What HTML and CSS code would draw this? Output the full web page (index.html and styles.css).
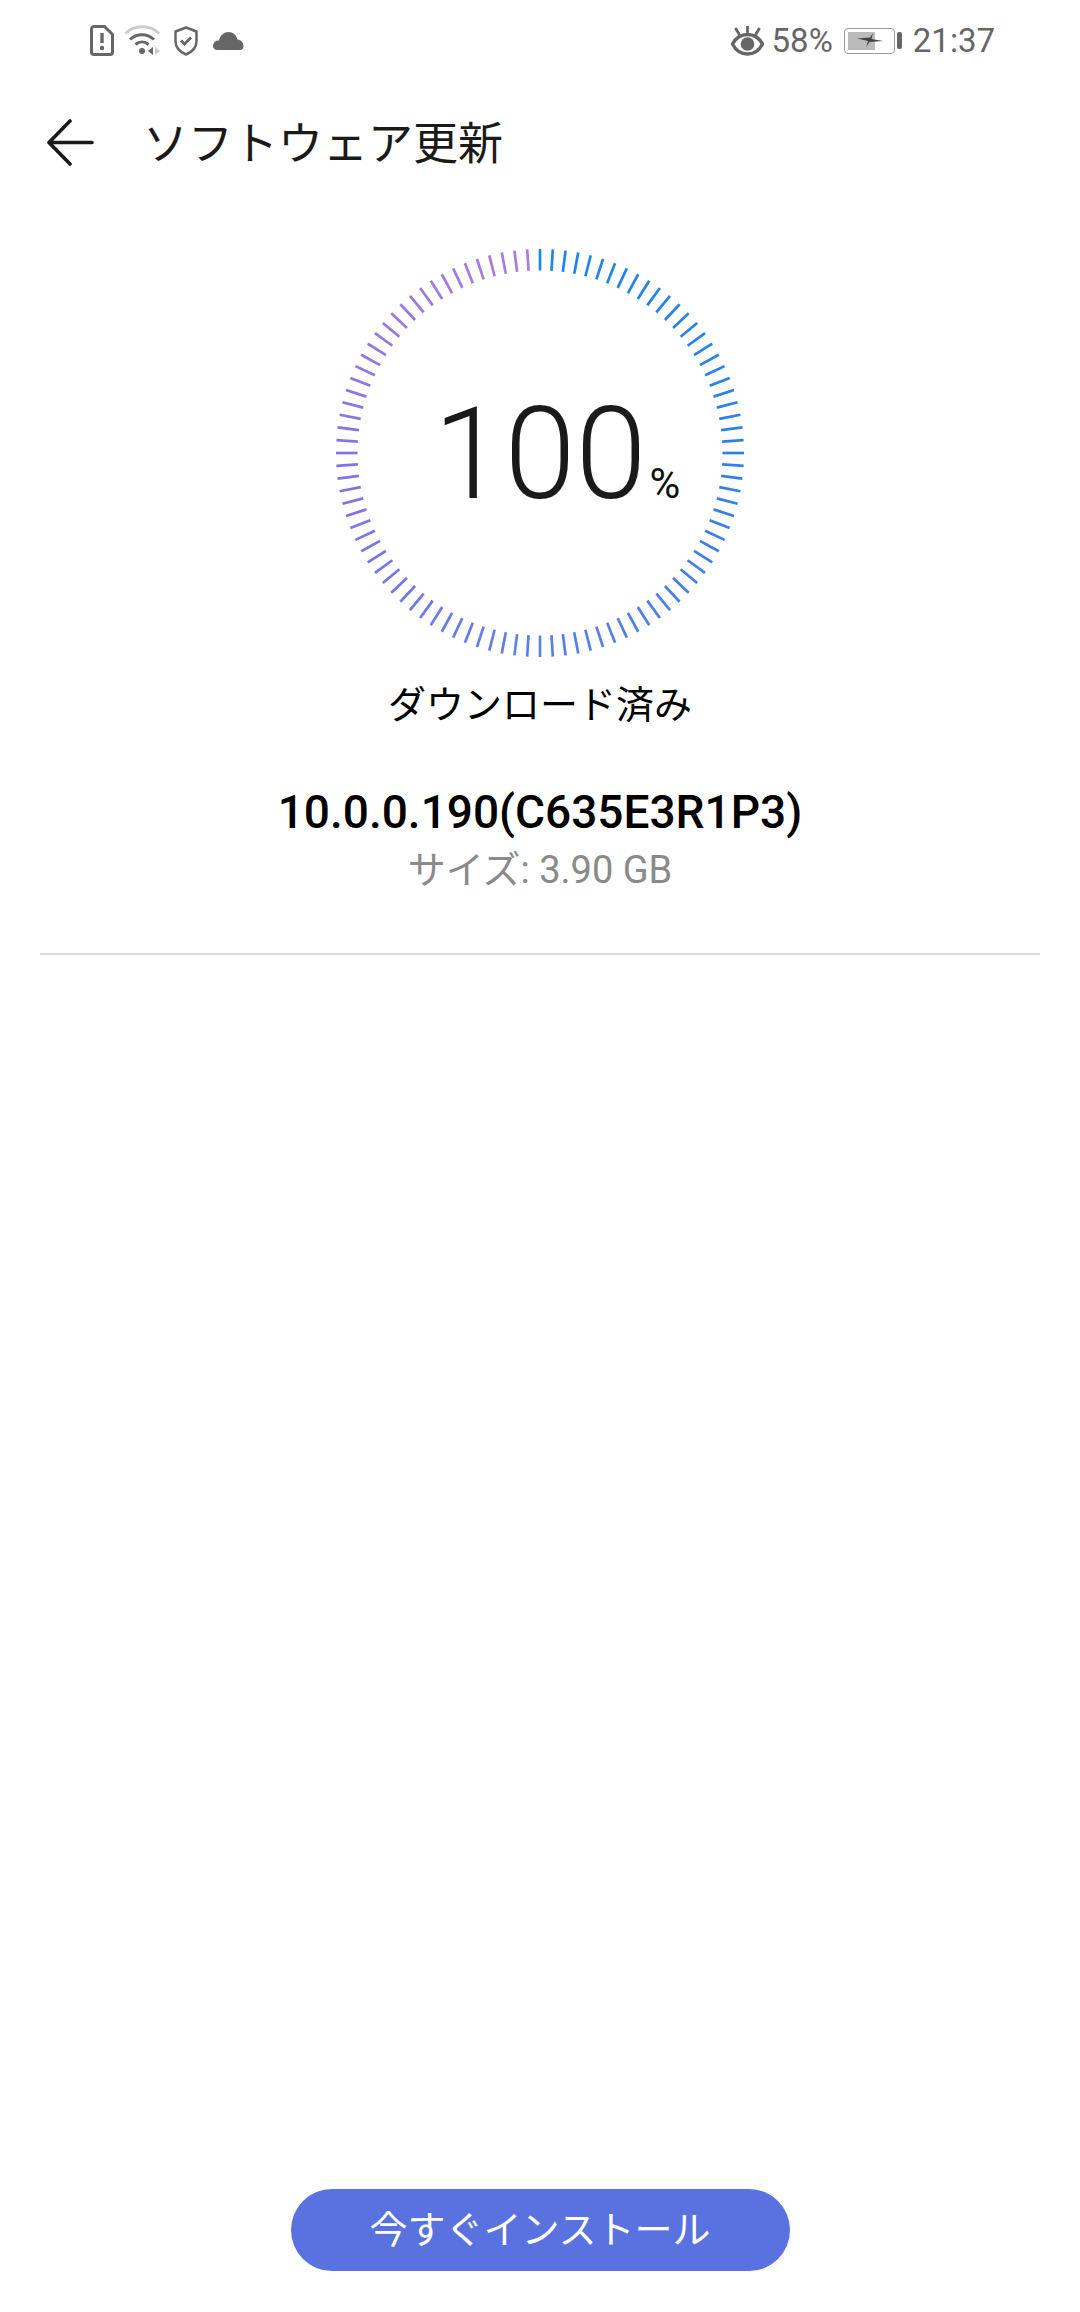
FILE: index.html
```html
<!DOCTYPE html>
<html lang="ja">
<head>
<meta charset="UTF-8">
<title>ソフトウェア更新</title>
<link rel="stylesheet" href="styles.css">
</head>
<body>

<div class="statusbar">
    <div class="status-group">
        <svg class="icon-sim" width="24" height="31" viewBox="0 0 24 31">
            <path d="M4 1.500h10.500L22.500 9.500V27a2.500 2.500 0 0 1-2.500 2.500H4A2.500 2.500 0 0 1 1.500 27V4A2.500 2.500 0 0 1 4 1.500z" fill="none" stroke="#666" stroke-width="3"/>
            <path d="M12 8v10" stroke="#666" stroke-width="3.400"/>
            <circle cx="12" cy="23" r="2.200" fill="#666"/>
        </svg>
        <svg class="icon-wifi" width="37" height="31" viewBox="0 0 37 31">
            <path d="M1.500 8.500C10 -0.500 26 -0.500 35 8.500" fill="none" stroke="#ccc" stroke-width="3"/>
            <path d="M6 14.500C13 8 23 8 30 14.500" fill="none" stroke="#666" stroke-width="3"/>
            <path d="M11.500 19.500C15.500 16 20.500 16 24.500 19.500" fill="none" stroke="#666" stroke-width="3"/>
            <circle cx="18" cy="26" r="3" fill="#666"/>
            <path d="M29 22v8l-5-4z" fill="#666"/>
            <path d="M31 22v8l5-4z" fill="#ccc"/>
        </svg>
        <svg class="icon-shield" width="24" height="30" viewBox="0 0 24 30">
            <path d="M12 1.500L22.500 5.500V15C22.500 21.500 18 26 12 28.500C6 26 1.500 21.500 1.500 15V5.500z" fill="none" stroke="#666" stroke-width="2.500" stroke-linejoin="round"/>
            <path d="M7 14.500L10.500 18L17 11.500" fill="none" stroke="#666" stroke-width="2.800"/>
        </svg>
        <svg class="icon-cloud" width="31" height="18" viewBox="0 0 31 18">
            <path d="M4 18a4 4 0 0 1-3.500-6A5 5 0 0 1 6 8.500C7 3 11.500 0 15.500 0c4.500 0 8 3 9 7.500 3.500.5 6 3 6 6.500 0 2.500-1.500 4-3.500 4z" fill="#666"/>
        </svg>
    </div>
    <div class="status-group status-right">
        <svg class="icon-eye" width="33" height="30" viewBox="0 0 33 30">
            <path d="M16.500 0v6M5 3l3 5M28 3l-3 5" stroke="#666" stroke-width="2.800" stroke-linecap="round"/>
            <path d="M1.500 18C5 11.500 10.500 8.500 16.500 8.500S28 11.500 31.500 18C28 25 22.500 28 16.500 28S5 25 1.500 18z" fill="none" stroke="#666" stroke-width="3.400"/>
            <circle cx="16.500" cy="18" r="6.800" fill="#666"/>
        </svg>
        <span class="battery-pct">58%</span>
        <div class="battery">
            <div class="battery-body">
                <div class="battery-level"></div>
                <svg class="battery-bolt" width="26" height="14" viewBox="0 0 26 14">
                    <path d="M0 5.500L13 4.500L16 0L14.500 6L26 8L12.500 9L9 14L11 8z" fill="#444"/>
                </svg>
            </div>
            <div class="battery-tip"></div>
        </div>
        <span class="clock">21:37</span>
    </div>
</div>

<div class="toolbar">
    <svg class="back" width="47" height="47" viewBox="0 0 47 47">
        <path d="M23 2L2 23.500L23 45M2 23.500H45" fill="none" stroke="#1a1a1a" stroke-width="3.600" stroke-linecap="round" stroke-linejoin="round"/>
    </svg>
    <h1>ソフトウェア更新</h1>
</div>

<div class="ring">
    <svg id="ticks" class="ring-ticks" width="408" height="408" viewBox="-204 -204 408 408"></svg>
    <div class="percent">
        <span class="percent-num">100</span><span class="percent-sign">%</span>
    </div>
</div>

<div class="state">ダウンロード済み</div>
<div class="version">10.0.0.190(C635E3R1P3)</div>
<div class="size">サイズ: 3.90 GB</div>
<div class="divider"></div>

<div class="actions">
    <div class="install">今すぐインストール</div>
</div>

<script src="script.js"></script>
</body>
</html>
```

FILE: styles.css
```css
* {
    box-sizing: border-box;
}
html, body {
    margin: 0;
    padding: 0;
}
body {
    width: 1080px;
    height: 2312px;
    display: flex;
    flex-direction: column;
    align-items: center;
    overflow: hidden;
    background: #fff;
    font-family: Roboto, "Noto Sans CJK JP", sans-serif;
    color: #1a1a1a;
}
.statusbar {
    width: 100%;
    height: 81px;
    padding: 0 85px 0 90px;
    display: flex;
    align-items: center;
    justify-content: space-between;
    color: #666;
    font-size: 33px;
}
.status-group {
    display: flex;
    align-items: center;
    gap: 10px;
}
.icon-shield {
    margin-left: 3px;
}
.icon-cloud {
    margin-left: 5px;
}
.status-right {
    gap: 0;
}
.battery-pct {
    margin-left: 8px;
}
.battery {
    margin-left: 11px;
    display: flex;
    align-items: center;
    gap: 2px;
}
.battery-body {
    position: relative;
    width: 51px;
    height: 26px;
    padding: 3px;
    border: 1.500px solid #999;
    border-radius: 4px;
}
.battery-level {
    width: 27px;
    height: 100%;
    background: #bbb;
}
.battery-bolt {
    position: absolute;
    left: 12px;
    top: 4px;
}
.battery-tip {
    width: 5px;
    height: 17px;
    background: #666;
    border-radius: 2px;
}
.clock {
    margin-left: 11px;
}
.toolbar {
    width: 100%;
    height: 123px;
    padding-left: 47px;
    display: flex;
    align-items: center;
}
.toolbar h1 {
    margin: 4px 0 0 49px;
    font-size: 45px;
    font-weight: 400;
    line-height: 60px;
}
.ring {
    position: relative;
    width: 408px;
    height: 408px;
    margin-top: 45px;
    display: flex;
    align-items: center;
    justify-content: center;
}
.ring-ticks {
    position: absolute;
    left: 0;
    top: 0;
}
.percent {
    display: flex;
    align-items: baseline;
    padding-top: 2px;
}
.percent-num {
    font-size: 128px;
    font-weight: 300;
    line-height: 150px;
}
.percent-sign {
    width: 0;
    margin: 0 -3px 0 3px;
    font-size: 42px;
    color: #111;
}
.state {
    margin-top: 23px;
    font-size: 38px;
    line-height: 50px;
    color: #000;
}
.version {
    margin-top: 52px;
    font-size: 46px;
    font-weight: 500;
    line-height: 60px;
    color: #000;
}
.size {
    margin-top: 6px;
    font-size: 38px;
    line-height: 44px;
    color: #8a8a8a;
}
.divider {
    width: 1000px;
    height: 2px;
    margin-top: 61px;
    background: #dcdcdc;
}
.actions {
    margin-top: auto;
    padding-bottom: 41px;
}
.install {
    width: 499px;
    height: 82px;
    border-radius: 41px;
    background: #5a72e0;
    color: #fff;
    font-size: 38px;
    line-height: 82px;
    text-align: center;
}
```

FILE: script.js
```js
// colours of the ring, clockwise from the top
const stops = [
    [27, 135, 233],
    [47, 127, 232],
    [92, 128, 234],
    [130, 114, 232],
    [171, 125, 224],
];

function tickColor(t) {
    let pos = t * (stops.length - 1);
    let i = Math.min(Math.floor(pos), stops.length - 2);
    let f = pos - i;
    let rgb = stops[i].map((v, n) => Math.round(v + (stops[i + 1][n] - v) * f));
    return "rgb(" + rgb.join(",") + ")";
}

let svg = document.getElementById("ticks");
for (let i = 0; i < 100; i++) {
    let line = document.createElementNS("http://www.w3.org/2000/svg", "line");
    line.setAttribute("x1", 0);
    line.setAttribute("x2", 0);
    line.setAttribute("y1", -204);
    line.setAttribute("y2", -182.5);
    line.setAttribute("stroke", tickColor(i / 99));
    line.setAttribute("stroke-width", 2.7);
    line.setAttribute("transform", "rotate(" + i * 3.6 + ")");
    svg.appendChild(line);
}
```
